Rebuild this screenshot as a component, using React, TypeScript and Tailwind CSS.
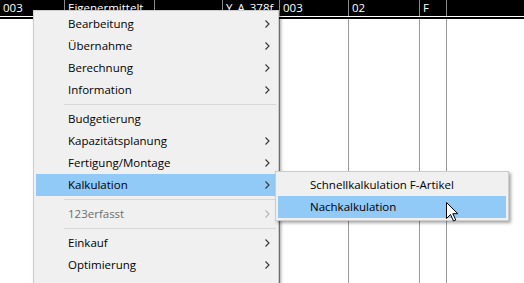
import React from "react";

const font = { fontFamily: '"Open Sans", "Noto Sans", sans-serif' };

const columns = [
  { w: "w-[65px]", label: "003" },
  { w: "w-[90px]", label: "Eigenermittelt" },
  { w: "w-[68px]", label: "" },
  { w: "w-[57px]", label: "Y_A_378f" },
  { w: "w-[69px]", label: "003" },
  { w: "w-[71px]", label: "02" },
  { w: "w-[27px]", label: "F" },
];

type Entry =
  | { kind: "item"; label: string; arrow?: boolean; active?: boolean; disabled?: boolean }
  | { kind: "sep" };

const entries: Entry[] = [
  { kind: "item", label: "Bearbeitung", arrow: true },
  { kind: "item", label: "Übernahme", arrow: true },
  { kind: "item", label: "Berechnung", arrow: true },
  { kind: "item", label: "Information", arrow: true },
  { kind: "sep" },
  { kind: "item", label: "Budgetierung" },
  { kind: "item", label: "Kapazitätsplanung", arrow: true },
  { kind: "item", label: "Fertigung/Montage", arrow: true },
  { kind: "item", label: "Kalkulation", arrow: true, active: true },
  { kind: "sep" },
  { kind: "item", label: "123erfasst", arrow: true, disabled: true },
  { kind: "sep" },
  { kind: "item", label: "Einkauf", arrow: true },
  { kind: "item", label: "Optimierung", arrow: true },
  { kind: "item", label: "Lagerhaltung", arrow: true },
];

const Chevron = ({ disabled }: { disabled?: boolean }) => (
  <svg width="5" height="8" viewBox="0 0 5 8" className="mr-[6px]">
    <polyline
      points="0.5,0.5 4,4 0.5,7.5"
      fill="none"
      stroke={disabled ? "#b4b4b4" : "#333"}
      strokeWidth="1.1"
    />
  </svg>
);

const Cursor = () => (
  <svg
    width="13"
    height="20"
    viewBox="0 0 13 20"
    className="absolute left-[446px] top-[202px]"
  >
    <path
      d="M0.5 0.5 L0.5 16.5 L4.5 12.5 L7.5 19 L9.8 18 L6.8 11.7 L11.8 11.7 Z"
      fill="#fff"
      stroke="#000"
      strokeWidth="1"
    />
  </svg>
);

const App = () => {
  return (
    <div
      className="relative flex h-[283px] w-[524px] flex-col overflow-hidden bg-white text-[11.5px]"
      style={font}
    >
      <div className="flex h-[16px] bg-black text-white">
        {columns.map((c, i) => (
          <div
            key={i}
            className={`${c.w} shrink-0 overflow-hidden whitespace-nowrap border-r border-[#8a8a8a] pl-[3px] leading-[16px]`}
          >
            {c.label}
          </div>
        ))}
        <div className="flex-1" />
      </div>
      <div className="h-[1px] bg-white" />
      <div className="h-[2px] bg-black" />
      <div className="flex flex-1">
        {columns.map((c, i) => (
          <div key={i} className={`${c.w} shrink-0 border-r border-[#9a9a9a]`} />
        ))}
        <div className="flex-1" />
      </div>

      <div className="absolute left-[33px] top-[10px] w-[246px] border border-[#cccccc] bg-[#f0f0f0] p-[2px] shadow-[2px_2px_3px_rgba(0,0,0,0.35)]">
        {entries.map((e, i) =>
          e.kind === "sep" ? (
            <div key={i} className="flex h-[7px] items-center pl-[28px]">
              <div className="h-[1px] w-full bg-[#d7d7d7]" />
            </div>
          ) : (
            <div
              key={i}
              className={`flex h-[22px] items-center justify-between pl-[32px] ${
                e.active ? "bg-[#91c9f7]" : ""
              } ${e.disabled ? "text-[#6d6d6d]" : "text-black"}`}
            >
              <span>{e.label}</span>
              {e.arrow && <Chevron disabled={e.disabled} />}
            </div>
          )
        )}
      </div>

      <div className="absolute left-[275px] top-[171px] w-[234px] border border-[#cccccc] bg-[#f0f0f0] p-[2px] shadow-[2px_2px_3px_rgba(0,0,0,0.35)]">
        <div className="flex h-[22px] items-center pl-[32px] text-black">
          Schnellkalkulation F-Artikel
        </div>
        <div className="flex h-[22px] items-center bg-[#91c9f7] pl-[32px] text-black">
          Nachkalkulation
        </div>
      </div>

      <Cursor />
    </div>
  );
};

export default App;
